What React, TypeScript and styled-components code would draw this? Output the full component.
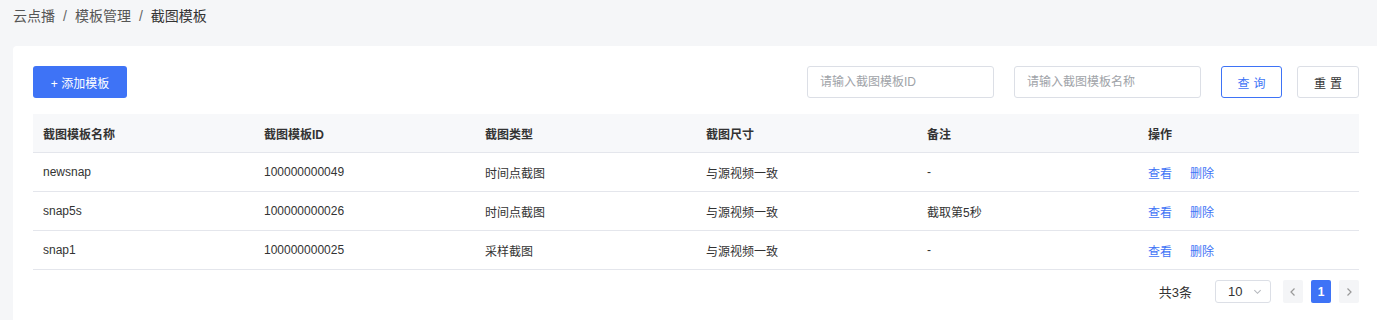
import React from "react";
import styled, { createGlobalStyle } from "styled-components";

const GlobalStyle = createGlobalStyle`
    html, body {
        margin: 0;
        padding: 0;
        background: #f5f6f8;
        font-family: "Liberation Sans", "Noto Sans CJK SC", Arial, sans-serif;
        color: #333;
        overflow: hidden;
    }
`;

const BLUE = "#3e73f6";

/* ------------------ Styled ------------------ */

const Page = styled.div`
    padding: 7px 0 0 13px;
`;

const Breadcrumb = styled.div`
    font-size: 14px;
    line-height: 18px;
    color: #555;
    height: 39px;
`;

const Crumb = styled.span<{ $current?: boolean }>`
    color: ${(p) => (p.$current ? "#333" : "#555")};
`;

const Sep = styled.span`
    margin: 0 8px;
    color: #666;
`;

const Card = styled.div`
    background: #fff;
    border-radius: 4px 0 0 0;
    margin-right: -2px;
    padding: 20px;
    min-height: 260px;
`;

const Toolbar = styled.div`
    display: flex;
    align-items: center;
    height: 32px;
    margin-bottom: 16px;
`;

const AddButton = styled.button`
    width: 94px;
    height: 32px;
    border: none;
    border-radius: 3px;
    background: ${BLUE};
    color: #fff;
    font-family: inherit;
    font-size: 12px;
    cursor: pointer;
`;

const Spacer = styled.div`
    flex: 1;
`;

const SearchInput = styled.input`
    width: 187px;
    height: 32px;
    box-sizing: border-box;
    border: 1px solid #dcdfe6;
    border-radius: 3px;
    padding: 0 12px;
    font-family: inherit;
    font-size: 12px;
    color: #333;
    margin-right: 20px;
    outline: none;

    &::placeholder {
        color: #a0a3a8;
    }
`;

const ToolButton = styled.button<{ $primary?: boolean }>`
    width: ${(p) => (p.$primary ? "61px" : "62px")};
    height: 32px;
    box-sizing: border-box;
    background: #fff;
    border: 1px solid ${(p) => (p.$primary ? BLUE : "#dcdfe6")};
    color: ${(p) => (p.$primary ? BLUE : "#333")};
    border-radius: 3px;
    font-family: inherit;
    font-size: 12px;
    letter-spacing: 4px;
    padding: 0 0 0 4px;
    margin-left: ${(p) => (p.$primary ? "0" : "15px")};
    cursor: pointer;
`;

const Table = styled.table`
    width: 100%;
    border-collapse: collapse;
    table-layout: fixed;
    font-size: 12px;
`;

const HeadCell = styled.th`
    background: #f7f8fa;
    height: 38px;
    padding: 0 10px;
    text-align: left;
    font-weight: bold;
    color: #333;
    border-bottom: 1px solid #e4e6ec;
`;

const Cell = styled.td`
    height: 38px;
    padding: 0 10px;
    color: #333;
    border-bottom: 1px solid #e4e6ec;
`;

const Link = styled.a`
    color: ${BLUE};
    text-decoration: none;
    margin-right: 18px;
    cursor: pointer;
`;

const Pager = styled.div`
    display: flex;
    align-items: center;
    justify-content: flex-end;
    margin-top: 10px;
    font-size: 12px;
    height: 23px;
`;

const Total = styled.span`
    margin-right: 23px;
    font-size: 13px;
`;

const SizeSelect = styled.div`
    width: 56px;
    height: 23px;
    box-sizing: border-box;
    border: 1px solid #dcdfe6;
    border-radius: 3px;
    display: flex;
    align-items: center;
    padding: 0 8px 0 12px;
    font-size: 13px;
    margin-right: 4px;
    justify-content: space-between;
`;

const PageBtn = styled.div<{ $active?: boolean }>`
    width: 20px;
    height: 23px;
    border-radius: 2px;
    background: ${(p) => (p.$active ? BLUE : "#f4f5f7")};
    color: ${(p) => (p.$active ? "#fff" : "#999")};
    display: flex;
    align-items: center;
    justify-content: center;
    font-size: 12px;
    font-weight: bold;
    margin-left: 8px;
`;

/* ------------------ Data ------------------ */

const columns = ["截图模板名称", "截图模板ID", "截图类型", "截图尺寸", "备注", "操作"];

const rows = [
    { name: "newsnap", id: "100000000049", type: "时间点截图", size: "与源视频一致", note: "-" },
    { name: "snap5s", id: "100000000026", type: "时间点截图", size: "与源视频一致", note: "截取第5秒" },
    { name: "snap1", id: "100000000025", type: "采样截图", size: "与源视频一致", note: "-" },
];

const Chevron: React.FC<{ dir: "left" | "right" | "down"; size?: number; color?: string }> = ({ dir, size = 10, color = "#999" }) => {
    const d = dir === "left" ? "M6.5 1.5 L3 5 L6.5 8.5" : dir === "right" ? "M3.5 1.5 L7 5 L3.5 8.5" : "M1.5 3.5 L5 7 L8.5 3.5";
    return (
        <svg width={size} height={size} viewBox="0 0 10 10">
            <path d={d} fill="none" stroke={color} strokeWidth="1.2" />
        </svg>
    );
};

/* ------------------ Component ------------------ */

export default function App() {
    return (
        <>
            <GlobalStyle />
            <Page>
                <Breadcrumb>
                    <Crumb>云点播</Crumb>
                    <Sep>/</Sep>
                    <Crumb>模板管理</Crumb>
                    <Sep>/</Sep>
                    <Crumb $current>截图模板</Crumb>
                </Breadcrumb>
                <Card>
                    <Toolbar>
                        <AddButton>+ 添加模板</AddButton>
                        <Spacer />
                        <SearchInput placeholder="请输入截图模板ID" />
                        <SearchInput placeholder="请输入截图模板名称" />
                        <ToolButton $primary>查询</ToolButton>
                        <ToolButton>重置</ToolButton>
                    </Toolbar>
                    <Table>
                        <thead>
                            <tr>
                                {columns.map((c) => (
                                    <HeadCell key={c}>{c}</HeadCell>
                                ))}
                            </tr>
                        </thead>
                        <tbody>
                            {rows.map((r) => (
                                <tr key={r.id}>
                                    <Cell>{r.name}</Cell>
                                    <Cell>{r.id}</Cell>
                                    <Cell>{r.type}</Cell>
                                    <Cell>{r.size}</Cell>
                                    <Cell>{r.note}</Cell>
                                    <Cell>
                                        <Link>查看</Link>
                                        <Link>删除</Link>
                                    </Cell>
                                </tr>
                            ))}
                        </tbody>
                    </Table>
                    <Pager>
                        <Total>共3条</Total>
                        <SizeSelect>
                            10
                            <Chevron dir="down" size={9} color="#b5b8bd" />
                        </SizeSelect>
                        <PageBtn>
                            <Chevron dir="left" />
                        </PageBtn>
                        <PageBtn $active>1</PageBtn>
                        <PageBtn>
                            <Chevron dir="right" />
                        </PageBtn>
                    </Pager>
                </Card>
            </Page>
        </>
    );
}
